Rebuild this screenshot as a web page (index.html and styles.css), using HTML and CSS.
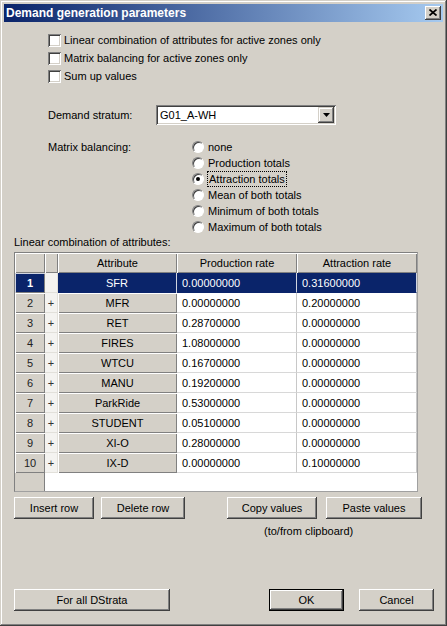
FILE: index.html
```html
<!DOCTYPE html>
<html>
<head>
<meta charset="utf-8">
<link rel="stylesheet" href="styles.css">
</head>
<body>
<div class="window">
  <div class="titlebar">
    <span class="title">Demand generation parameters</span>
    <span class="close"><svg width="8" height="7" viewBox="0 0 8 7"><path d="M0.5 0.5L7.5 6.5M7.5 0.5L0.5 6.5" stroke="#000" stroke-width="1.7"/></svg></span>
  </div>
  <div class="content">
    <div class="checks">
      <div class="check"><span class="box"></span><span>Linear combination of attributes for active zones only</span></div>
      <div class="check"><span class="box"></span><span>Matrix balancing for active zones only</span></div>
      <div class="check"><span class="box"></span><span>Sum up values</span></div>
    </div>
    <div class="stratum">
      <span class="stratum-label">Demand stratum:</span>
      <div class="combo">
        <span class="combo-text">G01_A-WH</span>
        <span class="combo-btn"><svg width="7" height="4" viewBox="0 0 7 4"><path d="M0 0h7L3.5 4z" fill="#000"/></svg></span>
      </div>
    </div>
    <div class="balancing">
      <span class="balancing-label">Matrix balancing:</span>
      <div class="radios">
        <div class="radio"><span class="circle"></span><span>none</span></div>
        <div class="radio"><span class="circle"></span><span>Production totals</span></div>
        <div class="radio"><span class="circle checked"></span><span class="focus">Attraction totals</span></div>
        <div class="radio"><span class="circle"></span><span>Mean of both totals</span></div>
        <div class="radio"><span class="circle"></span><span>Minimum of both totals</span></div>
        <div class="radio"><span class="circle"></span><span>Maximum of both totals</span></div>
      </div>
    </div>
    <div class="section-label">Linear combination of attributes:</div>
    <div class="grid">
      <div class="hd"></div><div class="hd"></div><div class="hd">Attribute</div><div class="hd">Production rate</div><div class="hd">Attraction rate</div>

      <div class="rh sel">1</div><div class="pl"></div><div class="at sel">SFR</div><div class="val sel">0.00000000</div><div class="val sel">0.31600000</div>
      <div class="rh">2</div><div class="pl">+</div><div class="at">MFR</div><div class="val">0.00000000</div><div class="val">0.20000000</div>
      <div class="rh">3</div><div class="pl">+</div><div class="at">RET</div><div class="val">0.28700000</div><div class="val">0.00000000</div>
      <div class="rh">4</div><div class="pl">+</div><div class="at">FIRES</div><div class="val">1.08000000</div><div class="val">0.00000000</div>
      <div class="rh">5</div><div class="pl">+</div><div class="at">WTCU</div><div class="val">0.16700000</div><div class="val">0.00000000</div>
      <div class="rh">6</div><div class="pl">+</div><div class="at">MANU</div><div class="val">0.19200000</div><div class="val">0.00000000</div>
      <div class="rh">7</div><div class="pl">+</div><div class="at">ParkRide</div><div class="val">0.53000000</div><div class="val">0.00000000</div>
      <div class="rh">8</div><div class="pl">+</div><div class="at">STUDENT</div><div class="val">0.05100000</div><div class="val">0.00000000</div>
      <div class="rh">9</div><div class="pl">+</div><div class="at">XI-O</div><div class="val">0.28000000</div><div class="val">0.00000000</div>
      <div class="rh">10</div><div class="pl">+</div><div class="at">IX-D</div><div class="val">0.00000000</div><div class="val">0.10000000</div>

      <div class="fill-head"></div><div class="fill-body"></div>
    </div>
    <div class="btn-row">
      <button class="btn w-insert">Insert row</button>
      <button class="btn w-delete">Delete row</button>
      <button class="btn w-copy">Copy values</button>
      <button class="btn w-paste">Paste values</button>
    </div>
    <div class="note">(to/from clipboard)</div>
    <div class="footer">
      <button class="btn w-all">For all DStrata</button>
      <button class="btn default w-ok">OK</button>
      <button class="btn w-cancel">Cancel</button>
    </div>
  </div>
</div>
</body>
</html>
```

FILE: styles.css
```css
html, body {
  margin: 0;
  padding: 0;
  background: #D4D0C8;
}
body {
  font-family: "Liberation Sans", Arial, sans-serif;
  font-size: 11px;
  color: #000;
}
.window {
  width: 447px;
  height: 626px;
  box-sizing: border-box;
  padding: 4px;
  background: #D4D0C8;
  box-shadow: inset -1px -1px #404040, inset 1px 1px #D4D0C8, inset -2px -2px #808080, inset 2px 2px #fff;
  display: flex;
  flex-direction: column;
}
.titlebar {
  height: 18px;
  flex: none;
  display: flex;
  align-items: center;
  padding-left: 2px;
  background: linear-gradient(to right, #0A246A, #A6CAF0);
}
.title {
  color: #fff;
  font-weight: bold;
  font-size: 12px;
}
.close {
  margin-left: auto;
  margin-right: 2px;
  width: 16px;
  height: 14px;
  box-sizing: border-box;
  background: #D4D0C8;
  box-shadow: inset -1px -1px #404040, inset 1px 1px #fff, inset -2px -2px #808080, inset 2px 2px #D4D0C8;
  display: flex;
  align-items: center;
  justify-content: center;
  padding: 0 1px 1px 0;
}
.content {
  flex: 1;
  display: flex;
  flex-direction: column;
}
.checks {
  margin-top: 9px;
  padding-left: 44px;
}
.check {
  height: 18px;
  display: flex;
  align-items: center;
  gap: 3px;
}
.box {
  width: 13px;
  height: 13px;
  box-sizing: border-box;
  background: #fff;
  box-shadow: inset 1px 1px #808080, inset -1px -1px #fff, inset 2px 2px #404040, inset -2px -2px #D4D0C8;
  flex: none;
}
.stratum {
  margin-top: 20px;
  padding-left: 44px;
  height: 20px;
  display: flex;
  align-items: center;
}
.stratum-label {
  width: 108px;
}
.combo {
  width: 180px;
  height: 20px;
  box-sizing: border-box;
  background: #fff;
  box-shadow: inset 1px 1px #808080, inset -1px -1px #fff, inset 2px 2px #404040, inset -2px -2px #D4D0C8;
  display: flex;
  align-items: center;
  padding: 2px;
}
.combo-text {
  flex: 1;
  padding-left: 2px;
}
.combo-btn {
  width: 16px;
  height: 16px;
  box-sizing: border-box;
  background: #D4D0C8;
  box-shadow: inset -1px -1px #404040, inset 1px 1px #D4D0C8, inset -2px -2px #808080, inset 2px 2px #fff;
  display: flex;
  align-items: center;
  justify-content: center;
}
.balancing {
  margin-top: 14px;
  padding-left: 44px;
  display: flex;
}
.balancing-label {
  width: 144px;
  line-height: 16px;
}
.radio {
  height: 16px;
  display: flex;
  align-items: center;
  gap: 4px;
}
.circle {
  width: 12px;
  height: 12px;
  box-sizing: border-box;
  border-radius: 50%;
  background: #fff;
  border: 1px solid;
  border-color: #808080 #fff #fff #808080;
  box-shadow: inset 1px 1px #404040;
  flex: none;
  display: flex;
  align-items: center;
  justify-content: center;
}
.circle.checked::after {
  content: "";
  width: 4px;
  height: 4px;
  border-radius: 50%;
  background: #000;
}
.focus {
  outline: 1px dotted #000;
  outline-offset: 0;
  padding: 1px 1px;
}
.section-label {
  padding-left: 10px;
  line-height: 14px;
}
.grid {
  margin-top: 3px;
  margin-left: 10px;
  width: 404px;
  height: 240px;
  box-sizing: border-box;
  border: 1px solid #808080;
  border-right-color: #A0A0A0;
  border-bottom-color: #A0A0A0;
  background: #fff;
  display: grid;
  grid-template-columns: 30px 13px 119px 120px 120px;
  grid-template-rows: repeat(11, 20px) 1fr;
  font-family: "Liberation Sans", Arial, sans-serif;
  font-size: 11px;
}
.grid > div {
  display: flex;
  align-items: center;
  box-sizing: border-box;
  white-space: nowrap;
  overflow: hidden;
}
.hd, .rh, .at {
  background: #D4D0C8;
  justify-content: center;
  box-shadow: inset 1px 1px #fff, inset -1px -1px #808080;
}
.rh {
  color: #222;
}
.pl {
  background: #F4F3F0;
  justify-content: center;
  color: #333;
  border-right: 1px solid #E2E0DA;
  border-bottom: 1px solid #E2E0DA;
}
.val {
  padding-left: 5px;
  border-right: 1px solid #C8C8C8;
  border-bottom: 1px solid #D8D8D8;
}
.sel {
  background: #0A246A;
  color: #fff;
  box-shadow: none;
  border-right-color: #D0D4E0;
  border-bottom-color: #0A246A;
}
.rh.sel {
  font-weight: bold;
  box-shadow: inset 1px 1px #D0D4E0, inset -1px -1px #808080;
}
.at.sel {
  border-right: 1px solid #D0D4E0;
}
.fill-head {
  background: #D4D0C8;
  box-shadow: inset -1px 0 #808080;
}
.fill-body {
  grid-column: 2 / 6;
  background: #fff;
}
.btn {
  height: 22px;
  box-sizing: border-box;
  border: none;
  margin: 0;
  padding: 0;
  background: #D4D0C8;
  font-family: "Liberation Sans", Arial, sans-serif;
  font-size: 11px;
  color: #000;
  box-shadow: inset -1px -1px #404040, inset 1px 1px #fff, inset -2px -2px #808080, inset 2px 2px #D4D0C8;
}
.btn.default {
  border: 1px solid #000;
  box-shadow: inset -1px -1px #404040, inset 1px 1px #fff, inset -2px -2px #808080, inset 2px 2px #D4D0C8;
}
.btn-row {
  margin-top: 5px;
  padding-left: 10px;
  display: flex;
}
.w-insert { width: 80px; }
.w-delete { width: 84px; margin-left: 7px; }
.w-copy { width: 90px; margin-left: 42px; }
.w-paste { width: 96px; margin-left: 9px; }
.note {
  margin-top: 5px;
  padding-left: 260px;
  line-height: 14px;
}
.footer {
  margin-top: auto;
  margin-bottom: 11px;
  padding: 0 9px 0 10px;
  display: flex;
}
.w-all { width: 156px; }
.w-ok { width: 75px; margin-left: auto; }
.w-cancel { width: 75px; margin-left: 15px; }
```
